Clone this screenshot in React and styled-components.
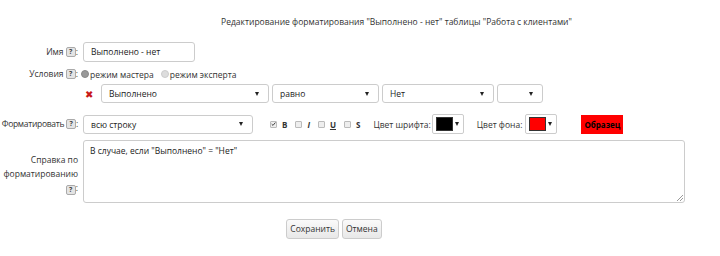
import React from 'react';
import styled, { createGlobalStyle } from 'styled-components';

const GlobalStyle = createGlobalStyle`
  html, body {
    margin: 0;
    padding: 0;
    background: #fff;
  }
  body {
    font-family: 'Open Sans', 'DejaVu Sans', sans-serif;
    font-size: 8.5px;
    color: #333;
  }
`;

function HelpIcon() {
  return <Help>?</Help>;
}

function Select({ width, value }) {
  return (
    <SelectBox $width={width}>
      <span>{value}</span>
      <Arrow />
    </SelectBox>
  );
}

function ColorPicker({ color }) {
  return (
    <Picker>
      <Swatch $color={color} />
      <Arrow />
    </Picker>
  );
}

function Check({ checked, label, variant }) {
  return (
    <CheckItem>
      <CheckBox>
        {checked && (
          <svg width="6" height="6" viewBox="0 0 6 6">
            <path d="M0.8 3.1 L2.4 4.7 L5.3 1.2" fill="none" stroke="#444" strokeWidth="1.2" />
          </svg>
        )}
      </CheckBox>
      <CheckLabel $variant={variant}>{label}</CheckLabel>
    </CheckItem>
  );
}

export default function App() {
  return (
    <Page>
      <GlobalStyle />
      <Title>Редактирование форматирования "Выполнено - нет" таблицы "Работа с клиентами"</Title>

      <Row $top={13}>
        <Label>Имя&nbsp;<HelpIcon />:</Label>
        <TextInput>Выполнено - нет</TextInput>
      </Row>

      <Row $top={6}>
        <Label>Условия&nbsp;<HelpIcon />:</Label>
        <Radios>
          <Radio><Dot $on />режим мастера</Radio>
          <Radio><Dot />режим эксперта</Radio>
        </Radios>
      </Row>

      <Row $top={4}>
        <Label />
        <Conditions>
          <Remove>✖</Remove>
          <Select width={168} value="Выполнено" />
          <Select width={107} value="равно" />
          <Select width={112} value="Нет" />
          <Select width={46} value="" />
        </Conditions>
      </Row>

      <Row $top={11}>
        <Label $tight>Форматировать&nbsp;<HelpIcon />:</Label>
        <FormatLine>
          <Select width={170} value="всю строку" />
          <Checks>
            <Check checked label="B" />
            <Check label="I" variant="italic" />
            <Check label="U" variant="underline" />
            <Check label="S" />
          </Checks>
          <ColorField $left={13} $gap={1}>
            Цвет шрифта:
            <ColorPicker color="#000" />
          </ColorField>
          <ColorField $left={13} $gap={3}>
            Цвет фона:
            <ColorPicker color="#f00" />
          </ColorField>
          <Sample>Образец</Sample>
        </FormatLine>
      </Row>

      <Row $top={6} $align="flex-start">
        <MultiLabel>
          Справка по<br />форматированию<br /><HelpIcon />:
        </MultiLabel>
        <TextArea>
          В случае, если "Выполнено" = "Нет"
          <Grip />
        </TextArea>
      </Row>

      <Buttons>
        <Button>Сохранить</Button>
        <Button>Отмена</Button>
      </Buttons>
    </Page>
  );
}

const Page = styled.div`
  width: 720px;
  height: 256px;
  padding-top: 15px;
  box-sizing: border-box;
`;

const Title = styled.div`
  text-align: center;
  padding-left: 73px;
  line-height: 14px;
`;

const Row = styled.div`
  display: flex;
  align-items: ${p => p.$align || 'center'};
  gap: 5px;
  margin-top: ${p => p.$top}px;
`;

const Label = styled.div`
  width: 78px;
  flex-shrink: 0;
  display: flex;
  justify-content: flex-end;
  align-items: center;
  white-space: nowrap;
  line-height: 12px;
  letter-spacing: ${p => (p.$tight ? '-0.3px' : 'normal')};
`;

const MultiLabel = styled.div`
  width: 78px;
  flex-shrink: 0;
  text-align: right;
  white-space: nowrap;
  line-height: 14px;
  padding-top: 13px;
`;

const Help = styled.span`
  display: inline-block;
  width: 8px;
  height: 8px;
  line-height: 8px;
  border: 1px solid #aaa;
  border-radius: 2px;
  background: #e4e4e4;
  color: #444;
  font-size: 7px;
  font-weight: bold;
  text-align: center;
  vertical-align: -1px;
  letter-spacing: normal;
`;

const TextInput = styled.div`
  width: 112px;
  height: 20px;
  box-sizing: border-box;
  border: 1px solid #ccc;
  border-radius: 3px;
  padding: 0 7px;
  line-height: 18px;
  color: #222;
`;

const Radios = styled.div`
  display: flex;
  gap: 7px;
  margin-left: -2px;
`;

const Radio = styled.span`
  display: flex;
  align-items: center;
`;

const Dot = styled.span`
  width: 6px;
  height: 6px;
  border-radius: 50%;
  background: ${p => (p.$on ? '#999' : '#ddd')};
  border: 1px solid ${p => (p.$on ? '#888' : '#ccc')};
  margin-right: 1px;
`;

const Conditions = styled.div`
  display: flex;
  align-items: center;
  gap: 3px;
`;

const Remove = styled.span`
  color: #c81818;
  font-size: 10px;
  width: 13px;
  margin-left: 2px;
`;

const SelectBox = styled.div`
  width: ${p => p.$width}px;
  height: 19px;
  box-sizing: border-box;
  border: 1px solid #ccc;
  border-radius: 3px;
  display: flex;
  align-items: center;
  justify-content: space-between;
  padding: 0 9px 0 7px;
  color: #222;
  background: #fff;
`;

const Arrow = styled.span`
  width: 0;
  height: 0;
  border-left: 2.5px solid transparent;
  border-right: 2.5px solid transparent;
  border-top: 4px solid #222;
`;

const FormatLine = styled.div`
  display: flex;
  align-items: center;
`;

const Checks = styled.div`
  display: flex;
  align-items: center;
  margin-left: 17px;
  gap: 8px;
`;

const CheckItem = styled.span`
  display: flex;
  align-items: center;
  gap: 5px;
`;

const CheckBox = styled.span`
  width: 5px;
  height: 5px;
  border: 1px solid #bbb;
  border-radius: 1px;
  background: #eee;
  display: flex;
  align-items: center;
  justify-content: center;
`;

const CheckLabel = styled.span`
  font-weight: bold;
  font-size: 8px;
  font-style: ${p => (p.$variant === 'italic' ? 'italic' : 'normal')};
  text-decoration: ${p => (p.$variant === 'underline' ? 'underline' : 'none')};
`;

const ColorField = styled.span`
  display: flex;
  align-items: center;
  gap: ${p => p.$gap}px;
  margin-left: ${p => p.$left}px;
`;

const Picker = styled.span`
  width: 32px;
  height: 20px;
  box-sizing: border-box;
  border: 1px solid #ccc;
  border-radius: 2px;
  display: flex;
  align-items: center;
  justify-content: space-between;
  padding: 0 4px 0 3px;
`;

const Swatch = styled.span`
  width: 17px;
  height: 14px;
  box-sizing: border-box;
  border: 1px solid #333;
  background: ${p => p.$color};
`;

const Sample = styled.span`
  margin-left: 24px;
  width: 42px;
  height: 19px;
  background: #f00;
  color: #000;
  font-weight: bold;
  font-size: 8px;
  display: flex;
  align-items: center;
  justify-content: center;
`;

const TextArea = styled.div`
  position: relative;
  width: 602px;
  height: 63px;
  box-sizing: border-box;
  border: 1px solid #ccc;
  border-radius: 3px;
  padding: 3px 6px;
  line-height: 14px;
  color: #222;
`;

const Grip = styled.span`
  position: absolute;
  right: 1px;
  bottom: 1px;
  width: 6px;
  height: 6px;
  background: linear-gradient(135deg, transparent 45%, #999 45%, #999 55%, transparent 55%, transparent 70%, #999 70%, #999 80%, transparent 80%);
`;

const Buttons = styled.div`
  display: flex;
  justify-content: center;
  gap: 3px;
  margin-top: 16px;
  padding-right: 52px;
`;

const Button = styled.div`
  height: 20px;
  box-sizing: border-box;
  border: 1px solid #ccc;
  border-radius: 3px;
  background: linear-gradient(#fafafa, #e8e8e8);
  padding: 0 3px;
  line-height: 18px;
  color: #333;
`;
